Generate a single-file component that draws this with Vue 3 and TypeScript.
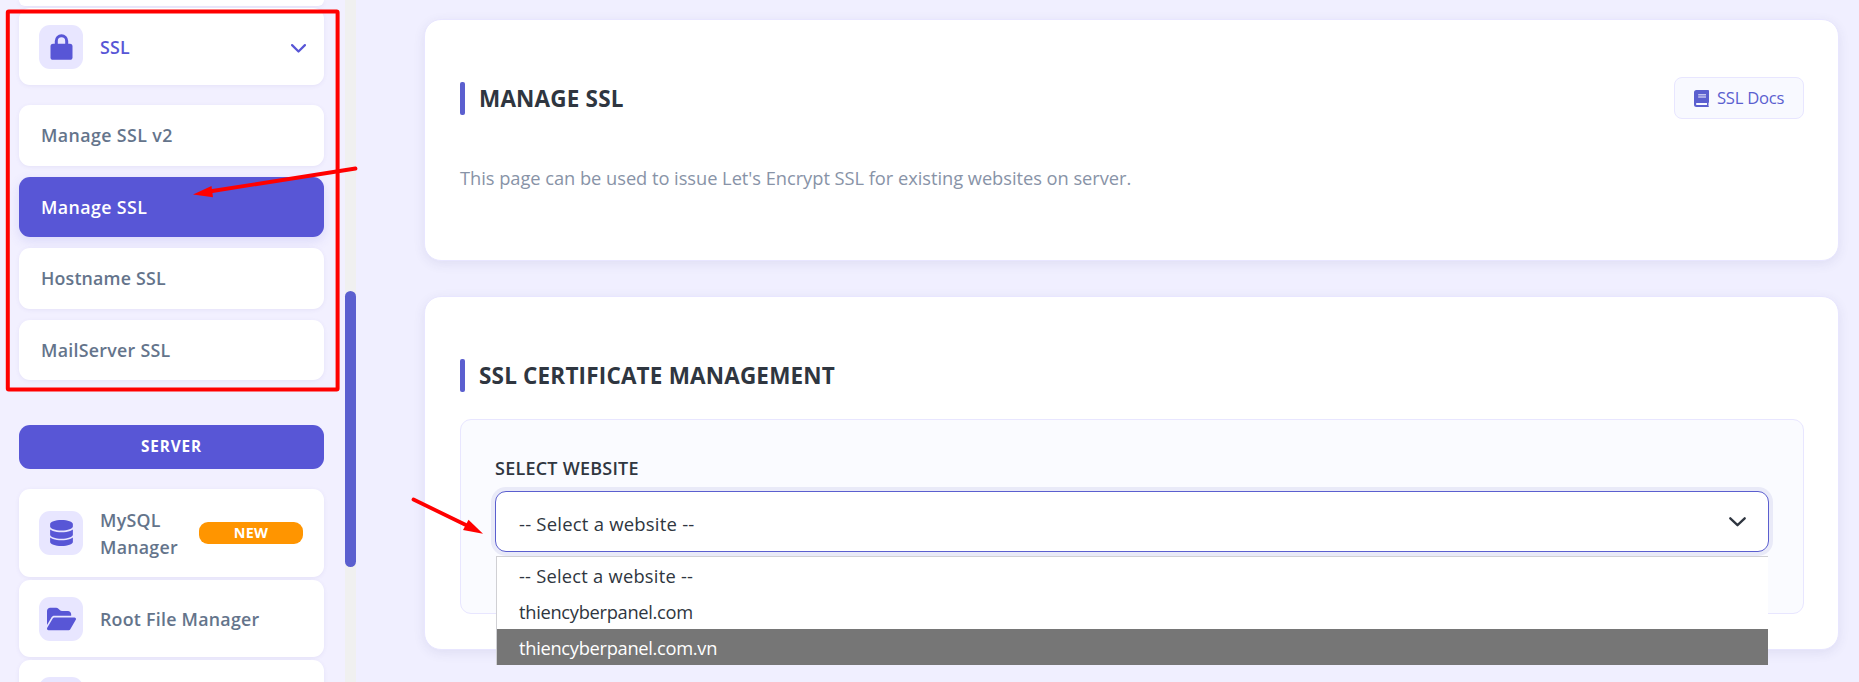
<script setup lang="ts">
interface SubItem {
  label: string
  cls: string
  active?: boolean
}

const subItems: SubItem[] = [
  { label: 'Manage SSL v2', cls: 'ls-a' },
  { label: 'Manage SSL', cls: 'ls-a', active: true },
  { label: 'Hostname SSL', cls: 'ls-b' },
  { label: 'MailServer SSL', cls: 'ls-c' },
]

const options: string[] = ['-- Select a website --', 'thiencyberpanel.com', 'thiencyberpanel.com.vn']
const highlighted = 2
</script>

<template>
  <div class="page">
    <aside class="sidebar">
      <nav class="nav">
        <div class="card stub-top"></div>
        <div class="card item ssl">
          <span class="icon-box">
            <svg width="23" height="26" viewBox="0 0 23 26"><rect x="0.500" y="9.800" width="22" height="16" rx="2.600" fill="currentColor" /><path d="M6.300 11V6.900a5.200 5.200 0 0 1 10.400 0V11" fill="none" stroke="currentColor" stroke-width="3" /></svg>
          </span>
          <span class="label">SSL</span>
          <svg class="chev" width="15" height="9" viewBox="0 0 15 9"><path d="M1.1 1.1 7.5 7.5l6.4-6.4" fill="none" stroke="currentColor" stroke-width="2.200" stroke-linecap="round" stroke-linejoin="round" /></svg>
        </div>
        <div class="submenu">
          <div v-for="s in subItems" :key="s.label" class="card sub" :class="[s.cls, { active: s.active }]">{{ s.label }}</div>
        </div>
        <div class="section">SERVER</div>
        <div class="card item mysql">
          <span class="icon-box">
            <svg width="23" height="26" viewBox="0 0 448 512"><path fill="currentColor" d="M448 80v48c0 44.2-100.3 80-224 80S0 172.2 0 128V80C0 35.8 100.3 0 224 0S448 35.8 448 80zM393.2 214.7c20.8-7.4 39.9-16.9 54.8-28.6V288c0 44.2-100.3 80-224 80S0 332.2 0 288V186.1c14.9 11.8 34 21.2 54.8 28.6C99.7 230.7 159.5 240 224 240s124.3-9.3 169.2-25.3zM0 346.1c14.9 11.8 34 21.2 54.8 28.6C99.7 390.7 159.5 400 224 400s124.3-9.3 169.2-25.3c20.8-7.4 39.9-16.9 54.8-28.6V432c0 44.2-100.3 80-224 80S0 476.2 0 432V346.1z" /></svg>
          </span>
          <span class="label">MySQL<br />Manager</span>
          <span class="badge">NEW</span>
        </div>
        <div class="card item root">
          <span class="icon-box">
            <svg width="29" height="26" viewBox="0 0 576 512"><path fill="currentColor" d="M88.7 223.8L0 375.8V96C0 60.7 28.7 32 64 32H181.5c17 0 33.3 6.7 45.3 18.7l26.5 26.5c12 12 28.3 18.7 45.3 18.7H416c35.3 0 64 28.7 64 64v32H144c-22.8 0-43.8 12.1-55.3 31.8zm27.6 16.1C122.1 230 132.6 224 144 224H544c11.5 0 22 6.1 27.7 16.1s5.7 22.2-.1 32.1l-112 192C453.9 474 443.4 480 432 480H32c-11.5 0-22-6.1-27.7-16.1s-5.7-22.2 .1-32.1l112-192z" /></svg>
          </span>
          <span class="label">Root File Manager</span>
        </div>
        <div class="card item stub-bottom"><span class="icon-box"></span></div>
      </nav>
      <div class="track"><div class="thumb"></div></div>
    </aside>

    <main class="main">
      <section class="panel intro">
        <header class="head">
          <h2 class="title">MANAGE SSL</h2>
          <a class="docs">
            <svg width="15" height="17" viewBox="0 0 15 17"><path fill="currentColor" fill-rule="evenodd" d="M2.500 0H14.200a.8.800 0 0 1 .8.800V12a1 1 0 0 1-.5.900V16.200l.5.500V17H2.500A2.500 2.500 0 0 1 0 14.500V2.500A2.500 2.500 0 0 1 2.500 0zM3 13a1 1 0 0 0 0 2.100H13V13z" /><path d="M4.200 4.700h7.800M4.200 7h7.800" stroke="#c3c4ee" stroke-width="1.400" /></svg>
            <span class="docs-text">SSL Docs</span>
          </a>
        </header>
        <p class="desc">This page can be used to issue Let's Encrypt SSL for existing websites on server.</p>
      </section>

      <section class="panel manage">
        <h2 class="title">SSL CERTIFICATE MANAGEMENT</h2>
        <div class="form">
          <div class="field-label">SELECT WEBSITE</div>
          <div class="select">
            <span class="value">-- Select a website --</span>
            <svg width="17" height="10" viewBox="0 0 17 10"><path d="M1.3 1.3 8.5 8.2l7.2-6.9" fill="none" stroke="#2f3640" stroke-width="2.3" stroke-linecap="round" stroke-linejoin="round" /></svg>
            <div class="dropdown">
              <div v-for="(o, i) in options" :key="o" class="option" :class="{ dashes: i === 0, hover: i === highlighted }">{{ o }}</div>
            </div>
          </div>
        </div>
      </section>
    </main>

    <svg class="marks" width="1859" height="682" viewBox="0 0 1859 682">
      <rect x="7.8" y="11.6" width="329.8" height="377.8" rx="1" fill="none" stroke="#f00" stroke-width="4" />
      <path d="M355.500 168.500 206 192" stroke="#f00" stroke-width="3.8" stroke-linecap="round" />
      <path d="M193 194.500 211.500 186 213 197.200z" fill="#f00" />
      <path d="M413.500 499.500 470 527" stroke="#f00" stroke-width="3.8" stroke-linecap="round" />
      <path d="M483 533.700 468.500 519.800 463 530z" fill="#f00" />
    </svg>
  </div>
</template>

<style>
body {
  margin: 0;
  overflow: hidden;
}
</style>

<style scoped>
* {
  box-sizing: border-box;
}

.page {
  position: relative;
  display: flex;
  width: 1859px;
  height: 682px;
  overflow: hidden;
  background: #f0efff;
  font-family: 'Open Sans', 'Noto Sans', sans-serif;
}

.sidebar {
  display: flex;
  flex: none;
  width: 356px;
  height: 682px;
  background: #f2f0ff;
}

.nav {
  display: flex;
  flex-direction: column;
  width: 345px;
  padding: 0 21px 0 19px;
}

.card {
  flex: none;
  border-radius: 11px;
  background: #fff;
  box-shadow: 0 1px 4px rgba(80, 70, 160, 0.08);
}

.stub-top {
  height: 6px;
  margin-bottom: 2px;
  border-radius: 0 0 11px 11px;
}

.item {
  display: flex;
  align-items: center;
  padding: 0 20px;
  color: #64748b;
  font-size: 17.8px;
  font-weight: 600;
  line-height: 27px;
  letter-spacing: 0.26px;
}

.label {
  padding-top: 2px;
}

.ssl {
  height: 77px;
  color: #5856d6;
}

.chev {
  margin: 3px -2px 0 auto;
}

.icon-box {
  display: flex;
  align-items: center;
  justify-content: center;
  flex: none;
  width: 44px;
  height: 44px;
  margin-right: 17px;
  border-radius: 11px;
  background: #e8e6ff;
  color: #5856d6;
}

.submenu {
  display: flex;
  flex-direction: column;
  gap: 11px;
  margin-top: 20px;
}

.sub {
  height: 60.5px;
  padding-left: 22px;
  color: #64748b;
  font-size: 17.8px;
  font-weight: 600;
  line-height: 61px;
}

.sub.active {
  background: #5856d6;
  color: #fff;
  box-shadow: 0 4px 12px rgba(88, 86, 214, 0.15);
}

.ls-a {
  letter-spacing: 0.4px;
}

.ls-b {
  letter-spacing: 0.18px;
}

.ls-c {
  letter-spacing: 0.28px;
}

.section {
  flex: none;
  height: 44px;
  margin: 45px 0 20px;
  border-radius: 11px;
  background: #5856d6;
  color: #fff;
  font-size: 15.3px;
  font-weight: 700;
  line-height: 43px;
  letter-spacing: 0.9px;
  text-align: center;
}

.mysql {
  height: 88px;
  margin-bottom: 3px;
}

.root {
  height: 77px;
  margin-bottom: 3px;
}

.stub-bottom {
  height: 77px;
}

.badge {
  width: 104px;
  height: 22px;
  margin: 0 1px 0 auto;
  border-radius: 9px;
  background: #ff9500;
  color: #fff;
  font-size: 14.4px;
  font-weight: 700;
  line-height: 21px;
  letter-spacing: 0.3px;
  text-align: center;
}

.track {
  width: 11px;
  padding-top: 291px;
  background: #f0f0f0;
}

.thumb {
  height: 276px;
  border-radius: 5.5px;
  background: #5b5fcf;
}

.main {
  flex: 1;
  padding: 19px 20px 0 68px;
}

.panel {
  border: 1px solid #e8e6ff;
  border-radius: 17px;
  background: #fff;
  box-shadow: 0 3px 12px rgba(60, 50, 120, 0.09);
}

.intro {
  height: 242px;
  padding: 57px 34px 0 35px;
}

.head {
  display: flex;
  align-items: center;
  justify-content: space-between;
}

.title {
  display: flex;
  align-items: center;
  margin: 0;
  color: #2f3640;
  font-size: 22.5px;
  font-weight: 700;
  line-height: 33px;
  letter-spacing: 0.18px;
}

.title::before {
  content: '';
  width: 5px;
  height: 33px;
  margin-right: 14px;
  border-radius: 2px;
  background: #5b5fcf;
}

.docs {
  display: flex;
  align-items: center;
  gap: 8px;
  width: 130px;
  height: 42px;
  padding-left: 19px;
  border: 1px solid #e8e6ff;
  border-radius: 8px;
  background: #f8f9ff;
  color: #5b5fcf;
  font-size: 16.6px;
  font-weight: 500;
  letter-spacing: -0.25px;
  white-space: nowrap;
}

.docs-text {
  padding-bottom: 2px;
}

.desc {
  margin: 44px 0 0;
  color: #8893a7;
  font-size: 18.3px;
  line-height: 30px;
  letter-spacing: -0.04px;
}

.manage {
  height: 354px;
  margin-top: 35px;
  padding: 62px 34px 0 35px;
}

.form {
  height: 195px;
  margin-top: 27px;
  padding: 35px 34px 0;
  border: 1px solid #e8e6ff;
  border-radius: 11px;
  background: #fafbff;
}

.field-label {
  height: 26px;
  color: #2f3640;
  font-size: 18px;
  font-weight: 600;
  line-height: 26px;
  letter-spacing: 0.23px;
}

.select {
  position: relative;
  display: flex;
  align-items: center;
  justify-content: space-between;
  height: 61px;
  margin-top: 10px;
  padding: 0 22px 0 23px;
  border: 1px solid #5b5fcf;
  border-radius: 11px;
  background: #fff;
  box-shadow: 0 0 0 4px #e9eaf8;
  color: #2f3640;
  font-size: 18.5px;
  letter-spacing: 0.21px;
}

.value {
  padding-top: 3px;
}

.dropdown {
  position: absolute;
  top: 64px;
  left: 0;
  width: 1272px;
  height: 109px;
  border-top: 1px solid #d0d0d4;
  border-left: 1px solid #d0d0d4;
  background: #fff;
}

.option {
  height: 36px;
  padding-left: 22px;
  font-size: 18.3px;
  line-height: 37px;
  letter-spacing: -0.3px;
}

.option.dashes {
  letter-spacing: 0.24px;
}

.option.hover {
  background: #767676;
  color: #fff;
}

.marks {
  position: absolute;
  top: 0;
  left: 0;
}
</style>
